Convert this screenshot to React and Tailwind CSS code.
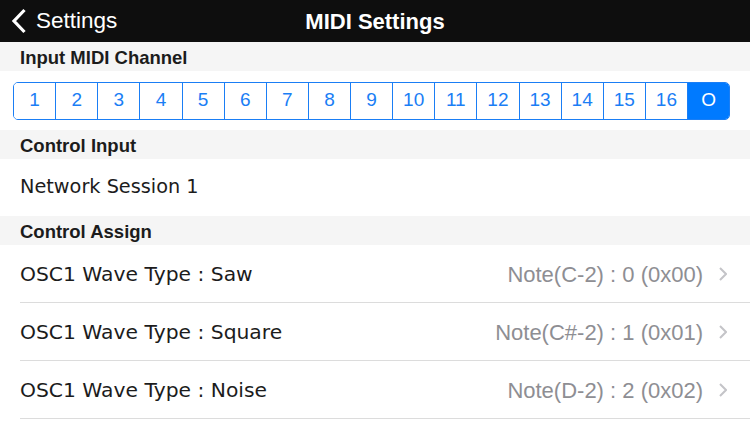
import { useState } from "react";

const channels = ["1", "2", "3", "4", "5", "6", "7", "8", "9", "10", "11", "12", "13", "14", "15", "16", "O"];

const assigns = [
  { name: "OSC1 Wave Type : Saw", note: "Note(C-2) : 0 (0x00)" },
  { name: "OSC1 Wave Type : Square", note: "Note(C#-2) : 1 (0x01)" },
  { name: "OSC1 Wave Type : Noise", note: "Note(D-2) : 2 (0x02)" },
];

function SectionHeader({ title }) {
  return (
    <div className="h-[29px] bg-[#f5f5f5] px-5 pt-[2px] flex items-center text-[18.5px] font-bold text-[#1c1c1c]">
      {title}
    </div>
  );
}

export default function App() {
  const [channel, setChannel] = useState("O");

  return (
    <div
      className="w-[750px] h-[423px] overflow-hidden bg-white"
      style={{ fontFamily: '"Liberation Sans", Arial, sans-serif' }}
    >
      {/* nav bar */}
      <div className="relative h-[42px] bg-[#0e0e0e] flex items-center text-white">
        <div className="flex items-center pl-[11px] gap-[9px]">
          <svg width="16" height="26" viewBox="0 0 16 26">
            <path d="M13.5 2 L3 13 L13.5 24" fill="none" stroke="white" strokeWidth="3.2" />
          </svg>
          <span className="text-[22.5px]">Settings</span>
        </div>
        <div className="absolute inset-0 flex items-center justify-center text-[22px] font-bold pointer-events-none">
          MIDI Settings
        </div>
      </div>

      <SectionHeader title="Input MIDI Channel" />
      <div className="h-[59px] flex items-center pl-[13px] pr-[20px]">
        <div className="flex w-full h-[38px] border border-[#1a7ef5] rounded-[5px] overflow-hidden">
          {channels.map((c, i) => (
            <button
              key={c}
              onClick={() => setChannel(c)}
              className={
                "flex-1 flex items-center justify-center text-[19px] " +
                (i > 0 ? "border-l border-[#1a7ef5] " : "") +
                (channel === c ? "bg-[#007aff] text-white" : "bg-white text-[#1a7ef5]")
              }
            >
              {c}
            </button>
          ))}
        </div>
      </div>

      <SectionHeader title="Control Input" />
      <div className="h-[57px] px-5 flex items-center text-[19.3px] text-[#1c1c1c]" style={{ fontFamily: '"DejaVu Sans", sans-serif' }}>
        Network Session 1
      </div>

      <SectionHeader title="Control Assign" />
      {assigns.map((a) => (
        <div key={a.name} className="pl-5">
          <div className="h-[58px] flex items-center border-b border-[#dcdcdc] pr-[23px]">
            <span className="flex-1 text-[20.3px] text-[#1c1c1c] pt-[2px]" style={{ fontFamily: '"DejaVu Sans", sans-serif' }}>
              {a.name}
            </span>
            <span className="text-[22px] text-[#8e8e93] pt-[2px]">{a.note}</span>
            <svg className="ml-[16px]" width="8" height="14" viewBox="0 0 8 14">
              <path d="M1 1 L7 7 L1 13" fill="none" stroke="#c4c4c8" strokeWidth="2" />
            </svg>
          </div>
        </div>
      ))}
    </div>
  );
}
